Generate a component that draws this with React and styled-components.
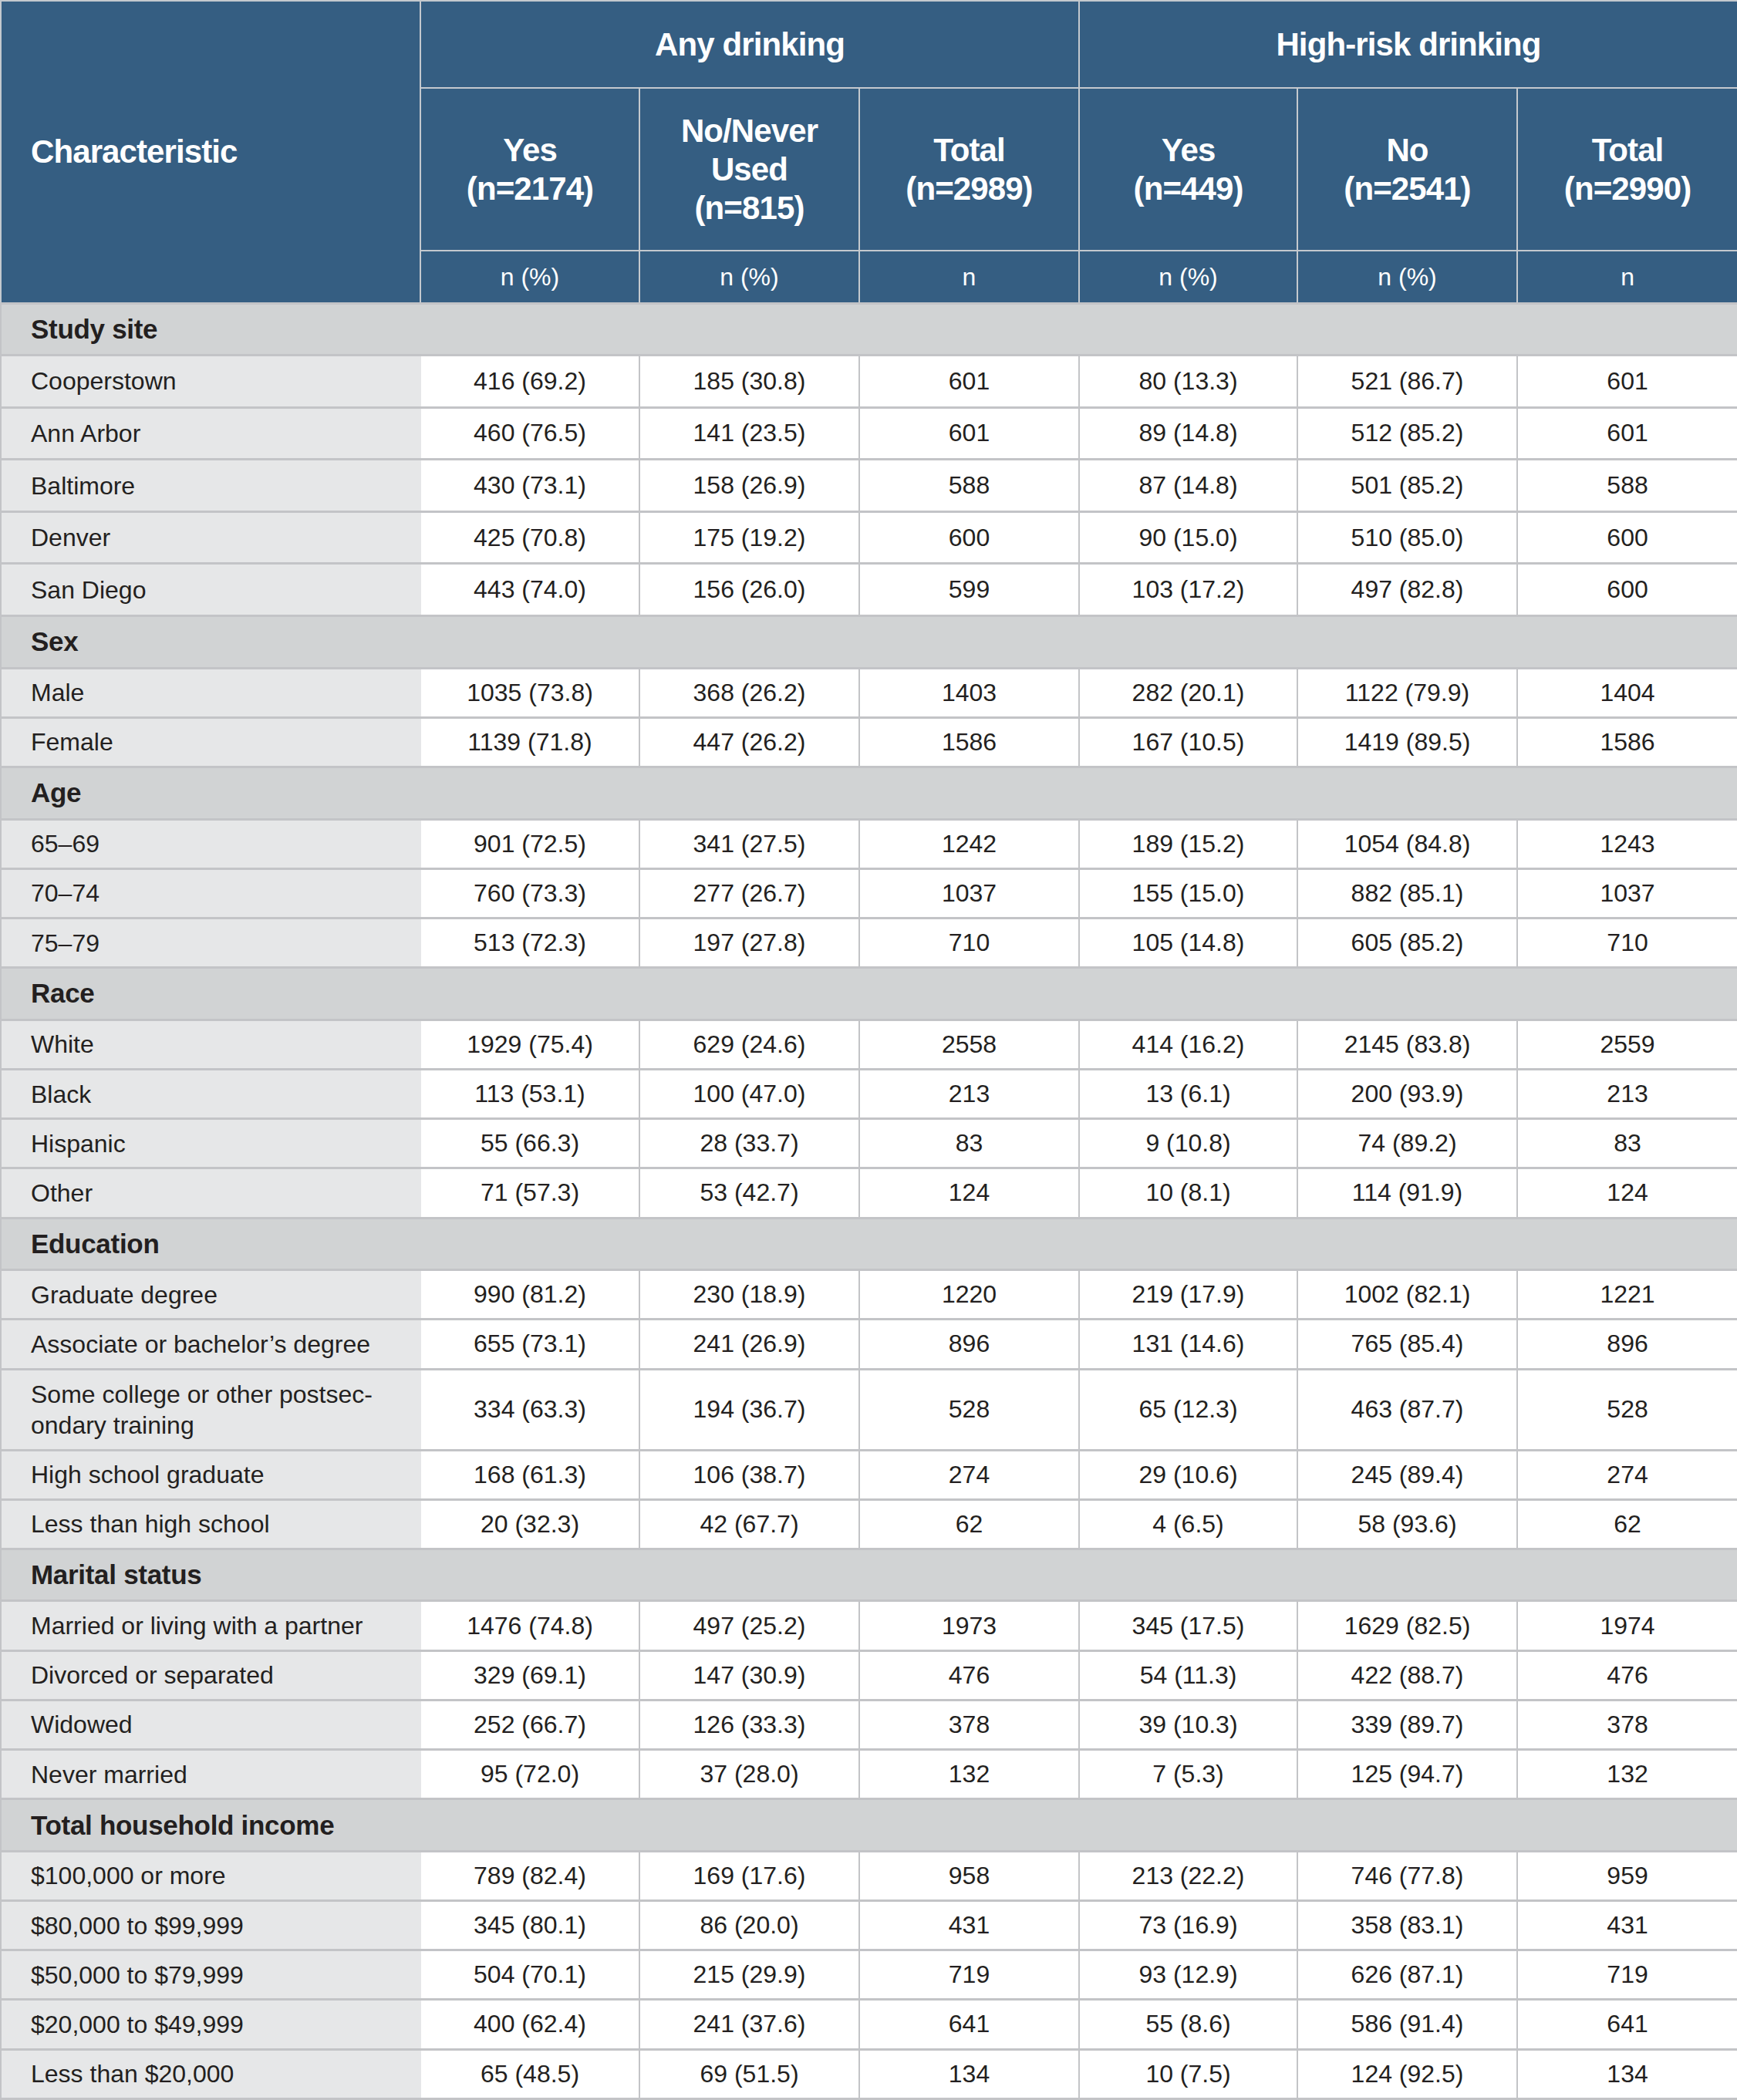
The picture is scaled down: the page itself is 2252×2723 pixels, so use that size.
import styled, { createGlobalStyle } from "styled-components";

const GlobalStyle = createGlobalStyle`
  html, body {
    margin: 0;
    padding: 0;
    background: #ffffff;
  }
  body {
    font-family: "Liberation Sans", Arial, sans-serif;
    color: #231f20;
  }
`;

const Table = styled.table`
  width: 2252px;
  table-layout: fixed;
  border-collapse: collapse;
  border: 2px solid #c3c4c7;
`;

const HeadCell = styled.th`
  background-color: #355e82;
  color: #ffffff;
  border: 2px solid #c4c9ce;
  font-size: ${(p) => (p.$unit ? "32px" : "42px")};
  font-weight: ${(p) => (p.$unit ? 400 : 700)};
  line-height: ${(p) => (p.$unit ? "36px" : "50px")};
  letter-spacing: ${(p) => (p.$unit ? "0" : "-0.9px")};
  text-align: ${(p) => (p.$left ? "left" : "center")};
  padding: ${(p) => (p.$left ? "0 0 0 38px" : "0")};
  vertical-align: middle;
`;

const HeadRow = styled.tr`
  height: ${(p) => p.$h}px;
`;

const SectionRow = styled.tr`
  height: 67.6px;
`;

const SectionCell = styled.td`
  background-color: #d1d3d4;
  border: 3px solid #c3c4c7;
  border-left: 2px solid #c3c4c7;
  border-right: 2px solid #c3c4c7;
  padding: 0 0 0 38px;
  font-size: 35px;
  font-weight: 700;
  letter-spacing: -0.3px;
  vertical-align: middle;
`;

const DataRow = styled.tr`
  height: ${(p) => p.$h}px;
`;

const LabelCell = styled.td`
  background-color: #e6e7e8;
  border-top: 3px solid #c3c4c7;
  border-bottom: 3px solid #c3c4c7;
  border-left: 2px solid #c3c4c7;
  border-right: 2px solid #e6e7e8;
  padding: 0 0 0 38px;
  font-size: 32px;
  line-height: 40px;
  vertical-align: middle;
`;

const ValueCell = styled.td`
  background-color: #ffffff;
  border-top: 3px solid #c3c4c7;
  border-bottom: 3px solid #c3c4c7;
  border-left: 2px solid #c3c4c7;
  border-right: 2px solid #c3c4c7;
  text-align: center;
  font-size: 32px;
  vertical-align: middle;
`;

const sections = [
  {
    title: "Study site",
    tall: true,
    rows: [
      ["Cooperstown", "416 (69.2)", "185 (30.8)", "601", "80 (13.3)", "521 (86.7)", "601"],
      ["Ann Arbor", "460 (76.5)", "141 (23.5)", "601", "89 (14.8)", "512 (85.2)", "601"],
      ["Baltimore", "430 (73.1)", "158 (26.9)", "588", "87 (14.8)", "501 (85.2)", "588"],
      ["Denver", "425 (70.8)", "175 (19.2)", "600", "90 (15.0)", "510 (85.0)", "600"],
      ["San Diego", "443 (74.0)", "156 (26.0)", "599", "103 (17.2)", "497 (82.8)", "600"],
    ],
  },
  {
    title: "Sex",
    rows: [
      ["Male", "1035 (73.8)", "368 (26.2)", "1403", "282 (20.1)", "1122 (79.9)", "1404"],
      ["Female", "1139 (71.8)", "447 (26.2)", "1586", "167 (10.5)", "1419 (89.5)", "1586"],
    ],
  },
  {
    title: "Age",
    rows: [
      ["65–69", "901 (72.5)", "341 (27.5)", "1242", "189 (15.2)", "1054 (84.8)", "1243"],
      ["70–74", "760 (73.3)", "277 (26.7)", "1037", "155 (15.0)", "882 (85.1)", "1037"],
      ["75–79", "513 (72.3)", "197 (27.8)", "710", "105 (14.8)", "605 (85.2)", "710"],
    ],
  },
  {
    title: "Race",
    rows: [
      ["White", "1929 (75.4)", "629 (24.6)", "2558", "414 (16.2)", "2145 (83.8)", "2559"],
      ["Black", "113 (53.1)", "100 (47.0)", "213", "13 (6.1)", "200 (93.9)", "213"],
      ["Hispanic", "55 (66.3)", "28 (33.7)", "83", "9 (10.8)", "74 (89.2)", "83"],
      ["Other", "71 (57.3)", "53 (42.7)", "124", "10 (8.1)", "114 (91.9)", "124"],
    ],
  },
  {
    title: "Education",
    rows: [
      ["Graduate degree", "990 (81.2)", "230 (18.9)", "1220", "219 (17.9)", "1002 (82.1)", "1221"],
      ["Associate or bachelor’s degree", "655 (73.1)", "241 (26.9)", "896", "131 (14.6)", "765 (85.4)", "896"],
      [["Some college or other postsec-", "ondary training"], "334 (63.3)", "194 (36.7)", "528", "65 (12.3)", "463 (87.7)", "528"],
      ["High school graduate", "168 (61.3)", "106 (38.7)", "274", "29 (10.6)", "245 (89.4)", "274"],
      ["Less than high school", "20 (32.3)", "42 (67.7)", "62", "4 (6.5)", "58 (93.6)", "62"],
    ],
  },
  {
    title: "Marital status",
    rows: [
      ["Married or living with a partner", "1476 (74.8)", "497 (25.2)", "1973", "345 (17.5)", "1629 (82.5)", "1974"],
      ["Divorced or separated", "329 (69.1)", "147 (30.9)", "476", "54 (11.3)", "422 (88.7)", "476"],
      ["Widowed", "252 (66.7)", "126 (33.3)", "378", "39 (10.3)", "339 (89.7)", "378"],
      ["Never married", "95 (72.0)", "37 (28.0)", "132", "7 (5.3)", "125 (94.7)", "132"],
    ],
  },
  {
    title: "Total household income",
    rows: [
      ["$100,000 or more", "789 (82.4)", "169 (17.6)", "958", "213 (22.2)", "746 (77.8)", "959"],
      ["$80,000 to $99,999", "345 (80.1)", "86 (20.0)", "431", "73 (16.9)", "358 (83.1)", "431"],
      ["$50,000 to $79,999", "504 (70.1)", "215 (29.9)", "719", "93 (12.9)", "626 (87.1)", "719"],
      ["$20,000 to $49,999", "400 (62.4)", "241 (37.6)", "641", "55 (8.6)", "586 (91.4)", "641"],
      ["Less than $20,000", "65 (48.5)", "69 (51.5)", "134", "10 (7.5)", "124 (92.5)", "134"],
    ],
  },
];

const groups = [
  { yes: "Yes", no: ["No/Never", "Used", "(n=815)"], yesN: "(n=2174)", total: "(n=2989)" },
  { yes: "Yes", no: ["No", "(n=2541)"], yesN: "(n=449)", total: "(n=2990)" },
];

function Lines({ lines }) {
  return lines.map((line, i) => (
    <span key={i}>
      {i > 0 && <br />}
      {line}
    </span>
  ));
}

export default function App() {
  return (
    <>
      <GlobalStyle />
      <Table>
        <colgroup>
          <col style={{ width: 544 }} />
          <col style={{ width: 284 }} />
          <col style={{ width: 285 }} />
          <col style={{ width: 285 }} />
          <col style={{ width: 283 }} />
          <col style={{ width: 285 }} />
          <col style={{ width: 286 }} />
        </colgroup>
        <thead>
          <HeadRow $h={113}>
            <HeadCell $left rowSpan={3}>Characteristic</HeadCell>
            <HeadCell colSpan={3}>Any drinking</HeadCell>
            <HeadCell colSpan={3}>High-risk drinking</HeadCell>
          </HeadRow>
          <HeadRow $h={211}>
            {groups.map((g, i) => [
              <HeadCell key={`y${i}`}>
                <Lines lines={[g.yes, g.yesN]} />
              </HeadCell>,
              <HeadCell key={`n${i}`}>
                <Lines lines={g.no} />
              </HeadCell>,
              <HeadCell key={`t${i}`}>
                <Lines lines={["Total", g.total]} />
              </HeadCell>,
            ])}
          </HeadRow>
          <HeadRow $h={68}>
            {["n (%)", "n (%)", "n", "n (%)", "n (%)", "n"].map((u, i) => (
              <HeadCell $unit key={i}>{u}</HeadCell>
            ))}
          </HeadRow>
        </thead>
        <tbody>
          {sections.map((s) => [
            <SectionRow key={s.title}>
              <SectionCell colSpan={7}>{s.title}</SectionCell>
            </SectionRow>,
            ...s.rows.map((r, i) => {
              const label = Array.isArray(r[0]) ? r[0] : [r[0]];
              const h = label.length > 1 ? 105 : s.tall ? 67.6 : 64.2;
              return (
                <DataRow $h={h} key={`${s.title}-${i}`}>
                  <LabelCell>
                    <Lines lines={label} />
                  </LabelCell>
                  {r.slice(1).map((v, j) => (
                    <ValueCell key={j}>{v}</ValueCell>
                  ))}
                </DataRow>
              );
            }),
          ])}
        </tbody>
      </Table>
    </>
  );
}
